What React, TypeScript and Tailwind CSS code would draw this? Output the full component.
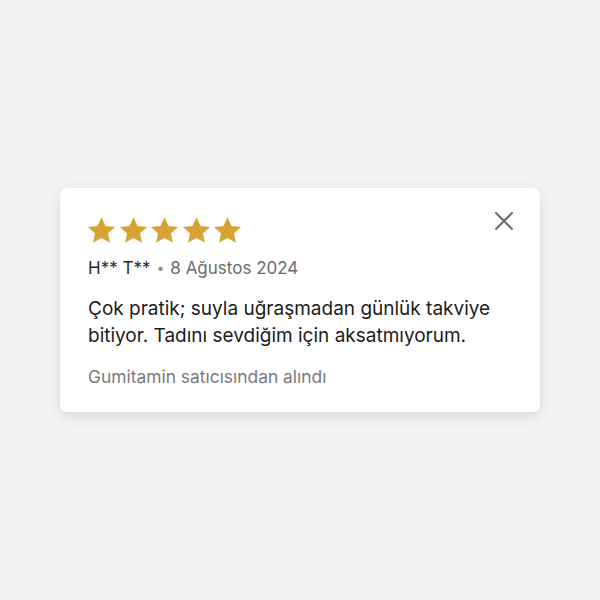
import React from "react";

function Star() {
  return (
    <svg width="27" height="26" viewBox="1.75 1.8 20.5 19.4" className="block">
      <path
        d="M12 1.8l3.05 6.6 7.2.8-5.35 4.9 1.5 7.1L12 17.6l-6.4 3.6 1.5-7.1L1.75 9.2l7.2-.8z"
        fill="#d6a334"
      />
    </svg>
  );
}

export default function App() {
  return (
    <div
      className="w-[600px] h-[600px] bg-[#f4f4f4] flex items-center justify-center"
      style={{ fontFamily: "Inter, 'Noto Sans', sans-serif" }}
    >
      <div className="relative w-[480px] h-[224px] bg-white rounded-[7px] shadow-[0_4px_14px_rgba(0,0,0,0.12)] pl-[28px] pt-[29px]">
        <div className="flex gap-[4.6px]">
          <Star />
          <Star />
          <Star />
          <Star />
          <Star />
        </div>
        <div className="mt-[14px] flex items-center text-[17px] leading-[22px]">
          <span className="text-[#2a2a2a]">H** T**</span>
          <span className="text-[#8a8a8a] mx-[6px] text-[14px]">•</span>
          <span className="text-[#6b6b6b]">8 Ağustos 2024</span>
        </div>
        <p className="mt-[16px] text-[19px] leading-[27px] text-[#1c1c1c] w-[430px]">
          Çok pratik; suyla uğraşmadan günlük takviye bitiyor. Tadını sevdiğim için aksatmıyorum.
        </p>
        <p className="mt-[17px] text-[17.4px] leading-[22px] text-[#7a7a7a]">
          Gumitamin satıcısından alındı
        </p>
        <button className="absolute top-[22px] right-[25px] w-[22px] h-[22px] flex items-center justify-center">
          <svg width="20" height="20" viewBox="0 0 20 20">
            <path d="M2 2L18 18M18 2L2 18" stroke="#6b6b6b" strokeWidth="2" strokeLinecap="round" />
          </svg>
        </button>
      </div>
    </div>
  );
}
